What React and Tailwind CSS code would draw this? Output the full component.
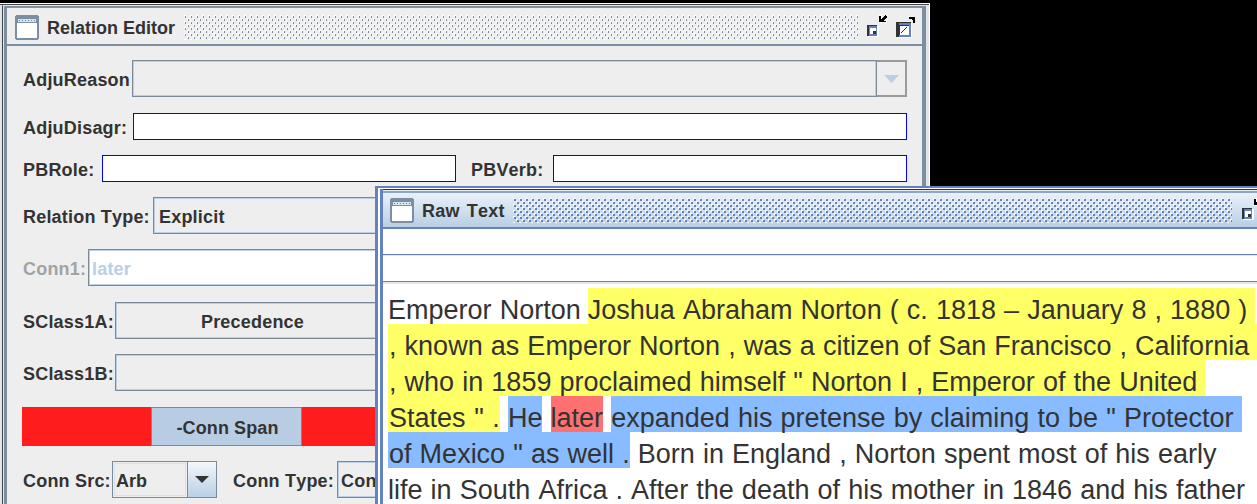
import React from "react";

const FONT = "font-['Liberation_Sans',Arial,sans-serif] [font-kerning:none]";

function WinIcon() {
  return (
    <svg width="24" height="25" viewBox="0 0 24 25" className="block shrink-0" shapeRendering="crispEdges">
      <path d="M1 0h22v1h1v23h-1v1H1v-1H0V1h1z" fill="#7d8ea1" />
      <rect x="2" y="8" width="20" height="15" fill="#fff" />
      <rect x="3" y="4" width="18" height="3" fill="#d8e4f0" />
      <path d="M4 5h1v1H4zM7 5h1v1H7zM10 5h1v1h-1zM13 5h1v1h-1zM16 5h1v1h-1zM19 5h1v1h-1z" fill="#6382bf" />
    </svg>
  );
}

function Bumps({ color, id, dot }) {
  return (
    <svg className="block" width="100%" height="25" shapeRendering="crispEdges">
      <defs>
        <pattern id={id} width="6" height="6" patternUnits="userSpaceOnUse">
          <rect x="0" y="0" width="2" height="2" fill="#fff" />
          <rect x="1" y="1" width={dot} height="2" fill={color} />
          <rect x="3" y="3" width="2" height="2" fill="#fff" />
          <rect x="4" y="4" width={dot} height="2" fill={color} />
        </pattern>
      </defs>
      <rect width="100%" height="25" fill={`url(#${id})`} />
    </svg>
  );
}

function MinButton() {
  return (
    <svg width="22" height="26" viewBox="0 0 22 26" shapeRendering="crispEdges" className="block shrink-0">
      <path d="M12 1h3v3l3-3h2v2l-3 3h3v3h-8z" fill="#fff" />
      <path d="M12 2h2v3l4-4 2 2-4 4h3v1h-7z" fill="#000" />
      <rect x="1" y="12" width="11" height="11" fill="#fff" />
      <rect x="0" y="11" width="10" height="11" fill="#6382bf" />
      <path d="M0 11h10v1H2v10H0z" fill="#333" />
      <rect x="3" y="14" width="6" height="6" fill="#fff" />
      <rect x="6" y="17" width="3" height="3" fill="#333" />
    </svg>
  );
}

function MaxButton() {
  return (
    <svg width="20" height="26" viewBox="0 0 20 26" shapeRendering="crispEdges" className="block shrink-0">
      <path d="M13 3h6v6h-2V6h-1V5h-3z" fill="#000" />
      <rect x="1" y="9" width="15" height="15" fill="#fff" />
      <rect x="0" y="8" width="15" height="15" fill="#6382bf" />
      <path d="M0 8h15v1H3v14H0z" fill="#333" />
      <rect x="3" y="11" width="10" height="10" fill="#fff" />
      <path d="M3 11h10v1H4v9H3z" fill="#333" />
      <path d="M5 18h1v1H5zM6 17h1v1H6zM7 16h1v1H7zM8 15h1v1H8zM9 14h1v1H9zM10 13h1v1h-1z" fill="#333" />
    </svg>
  );
}

function Label({ children, w, muted }) {
  return (
    <span className={"shrink-0 whitespace-nowrap pt-[3px] text-[18px] font-bold leading-none tracking-[0.2px] " + (muted ? "text-[#a3a3a3]" : "text-[#333]")} style={w ? { width: w } : undefined}>
      {children}
    </span>
  );
}

function Box({ className = "", children }) {
  return (
    <div className={"h-full border border-[#7a8a99] " + className}>
      <div className="flex h-full w-full items-center border border-[#b8cfe5] pt-[3px] text-[18px] font-bold tracking-[0.2px] text-[#333]">{children}</div>
    </div>
  );
}

function BlueInput({ className = "" }) {
  return <div className={"h-[27px] border border-[#0000ff] bg-white " + className} />;
}

function RelationEditor() {
  return (
    <div className={"absolute left-0 top-[3px] h-[520px] w-[930px] border-r border-t border-white bg-[#dfe5ea] " + FONT}>
      <div className="h-full border-t border-[#444] pl-[2px] pr-[3px]">
        <div className="h-full border-l border-t border-[#444] border-t-[#dfe5ea] pl-[1px]">
          <div className="h-full border-l-[3px] border-r-[4px] border-t-2 border-[#7d8ea1] bg-[#eeeeee]">
            <div className="flex h-[38px] items-center border-b-2 border-[#7d8ea1] pl-[8px] pr-[6px] pt-[2px]">
              <WinIcon />
              <span className="ml-[8px] whitespace-nowrap pt-[2px] text-[18px] font-bold text-[#333]">Relation Editor</span>
              <div className="ml-[9px] min-w-0 flex-1"><Bumps color="#7d8ea1" id="bumpsA" dot={1} /></div>
              <div className="ml-[9px] flex gap-[7px]">
                <MinButton />
                <MaxButton />
              </div>
            </div>
            <div className="pl-[16px] pr-[15px] pt-[14px]">
              <div className="flex h-[37px] items-center">
                <Label w="109px">AdjuReason</Label>
                <Box className="flex-1"><span /></Box>
                <div className="flex h-full w-[30px] items-center justify-center border-2 border-l-0 border-[#9a9a9a]">
                  <svg width="15" height="8" viewBox="0 0 15 8"><path d="M0 0h15L7.5 8z" fill="#b8cfe5" /></svg>
                </div>
              </div>
              <div className="mt-[16px] flex h-[27px] items-center">
                <Label w="110px">AdjuDisagr:</Label>
                <BlueInput className="flex-1" />
              </div>
              <div className="mt-[15px] flex h-[27px] items-center">
                <Label w="79px">PBRole:</Label>
                <BlueInput className="w-[354px]" />
                <span className="ml-[15px] flex w-[82px] shrink-0"><Label>PBVerb:</Label></span>
                <BlueInput className="flex-1" />
              </div>
              <div className="mt-[15px] flex h-[37px] items-center">
                <Label w="130px">Relation Type:</Label>
                <Box className="flex-1"><span className="pl-[4px]">Explicit</span></Box>
              </div>
              <div className="mt-[15px] flex h-[37px] items-center">
                <Label w="65px" muted>Conn1:</Label>
                <Box className="flex-1 bg-white"><span className="pl-[2px] text-[#b8cfe5]">later</span></Box>
              </div>
              <div className="mt-[16px] flex h-[37px] items-center">
                <Label w="92px">SClass1A:</Label>
                <Box className="w-[275px]"><span className="w-full text-center">Precedence</span></Box>
              </div>
              <div className="mt-[15px] flex h-[37px] items-center">
                <Label w="92px">SClass1B:</Label>
                <Box className="flex-1"><span /></Box>
              </div>
              <div className="-ml-px mt-[16px] flex h-[39px] bg-[#ff1c1c] pl-[129px]">
                <div className="flex h-full w-[151px] items-center justify-center border border-[#7a8a99] bg-[#b8cde4] pl-[2px] pt-[3px] text-[18px] font-bold tracking-[0.1px] text-[#333]">-Conn Span</div>
              </div>
              <div className="mt-[15px] flex h-[37px] items-center">
                <Label w="89px">Conn Src:</Label>
                <div className="flex h-full w-[105px] border border-[#7a8a99] bg-[#eeeeee]">
                  <div className="flex-1 p-px"><div className="flex h-full items-center border border-[#d5e2ef] pl-[1px] pt-[3px] text-[18px] font-bold text-[#333]">Arb</div></div>
                  <div className="flex w-[29px] items-center justify-center border-l border-[#7a8a99] bg-gradient-to-b from-[#f4f7fb] to-[#b8cfe5]">
                    <svg width="14" height="7" viewBox="0 0 14 7"><path d="M0 0h14L7 7z" fill="#333" /></svg>
                  </div>
                </div>
                <span className="ml-[16px] flex w-[104px] shrink-0"><Label>Conn Type:</Label></span>
                <Box className="w-[200px]"><span className="pl-[2px]">Conn</span></Box>
              </div>
            </div>
          </div>
        </div>
      </div>
    </div>
  );
}

const SP = "inline-block h-[36px] whitespace-pre align-top leading-[44px] ";
const Y = SP + "bg-[#ffff66]";
const B = SP + "bg-[#88bbff]";
const R = SP + "bg-[#ff7070]";

function Line({ children }) {
  return <div className="flex h-[36px] whitespace-pre leading-[44px]">{children}</div>;
}

function RawText() {
  return (
    <div className={"absolute left-[375px] top-[186px] h-[360px] w-[900px] border-l-[3px] border-t-2 border-[#6382bf] bg-white " + FONT}>
      <div className="h-full border-t border-white pl-[2px]">
        <div className="h-full border-l-[3px] border-[#6382bf]">
          <div className="border-t border-[#333]">
            <div className="border-t border-[#e4ebf3]">
              <div className="flex h-[38px] items-center border-y-2 border-y-[#8fa3cc] border-b-[#6382bf] bg-gradient-to-b from-[#eaf1f9] to-[#b8cfe5] pl-[7px]">
                <WinIcon />
                <span className="ml-[8px] whitespace-nowrap pt-[2px] text-[18px] font-bold tracking-[0.2px] text-[#333] [word-spacing:2px]">Raw Text</span>
                <div className="ml-[8px] w-[719px] shrink-0"><Bumps color="#6382bf" id="bumpsB" dot={2} /></div>
                <div className="ml-[10px]"><MinButton /></div>
              </div>
            </div>
          </div>
          <div className="h-[26px] border-b border-[#6382bf] bg-white" />
          <div className="h-[1px] bg-[#e6e6e6]" />
          <div className="h-[26px] border-b border-[#6382bf] bg-white" />
          <div className="h-[2px] bg-[#e6e6e6]" />
          <div className="pl-[5px] pt-[4px] text-[27px] text-[#333] [word-spacing:0.6px]">
            <Line><span>Emperor Norton </span><span className={Y + " -ml-px"}>Joshua Abraham Norton ( c. 1818 – January 8 , 1880 ) </span></Line>
            <Line><span className={Y + " pl-px"}>, known as Emperor Norton , was a citizen of San Francisco , California </span></Line>
            <Line><span className={Y + " pl-px"}>, who in 1859 proclaimed himself " Norton I , Emperor of the United </span></Line>
            <Line><span className={Y + " pl-px [word-spacing:1.1px]"}>States " .</span><span> </span><span className={B}>He</span><span> </span><span className={R}>later</span><span> </span><span className={B}>expanded his pretense by claiming to be " Protector </span></Line>
            <Line><span className={B + " pl-px"}>of Mexico " as well .</span><span> Born in England , Norton spent most of his early</span></Line>
            <Line><span>life in South Africa . After the death of his mother in 1846 and his father</span></Line>
          </div>
        </div>
      </div>
    </div>
  );
}

export default function App() {
  return (
    <div className="relative h-[504px] w-[1257px] overflow-hidden bg-black">
      <RelationEditor />
      <RawText />
    </div>
  );
}
